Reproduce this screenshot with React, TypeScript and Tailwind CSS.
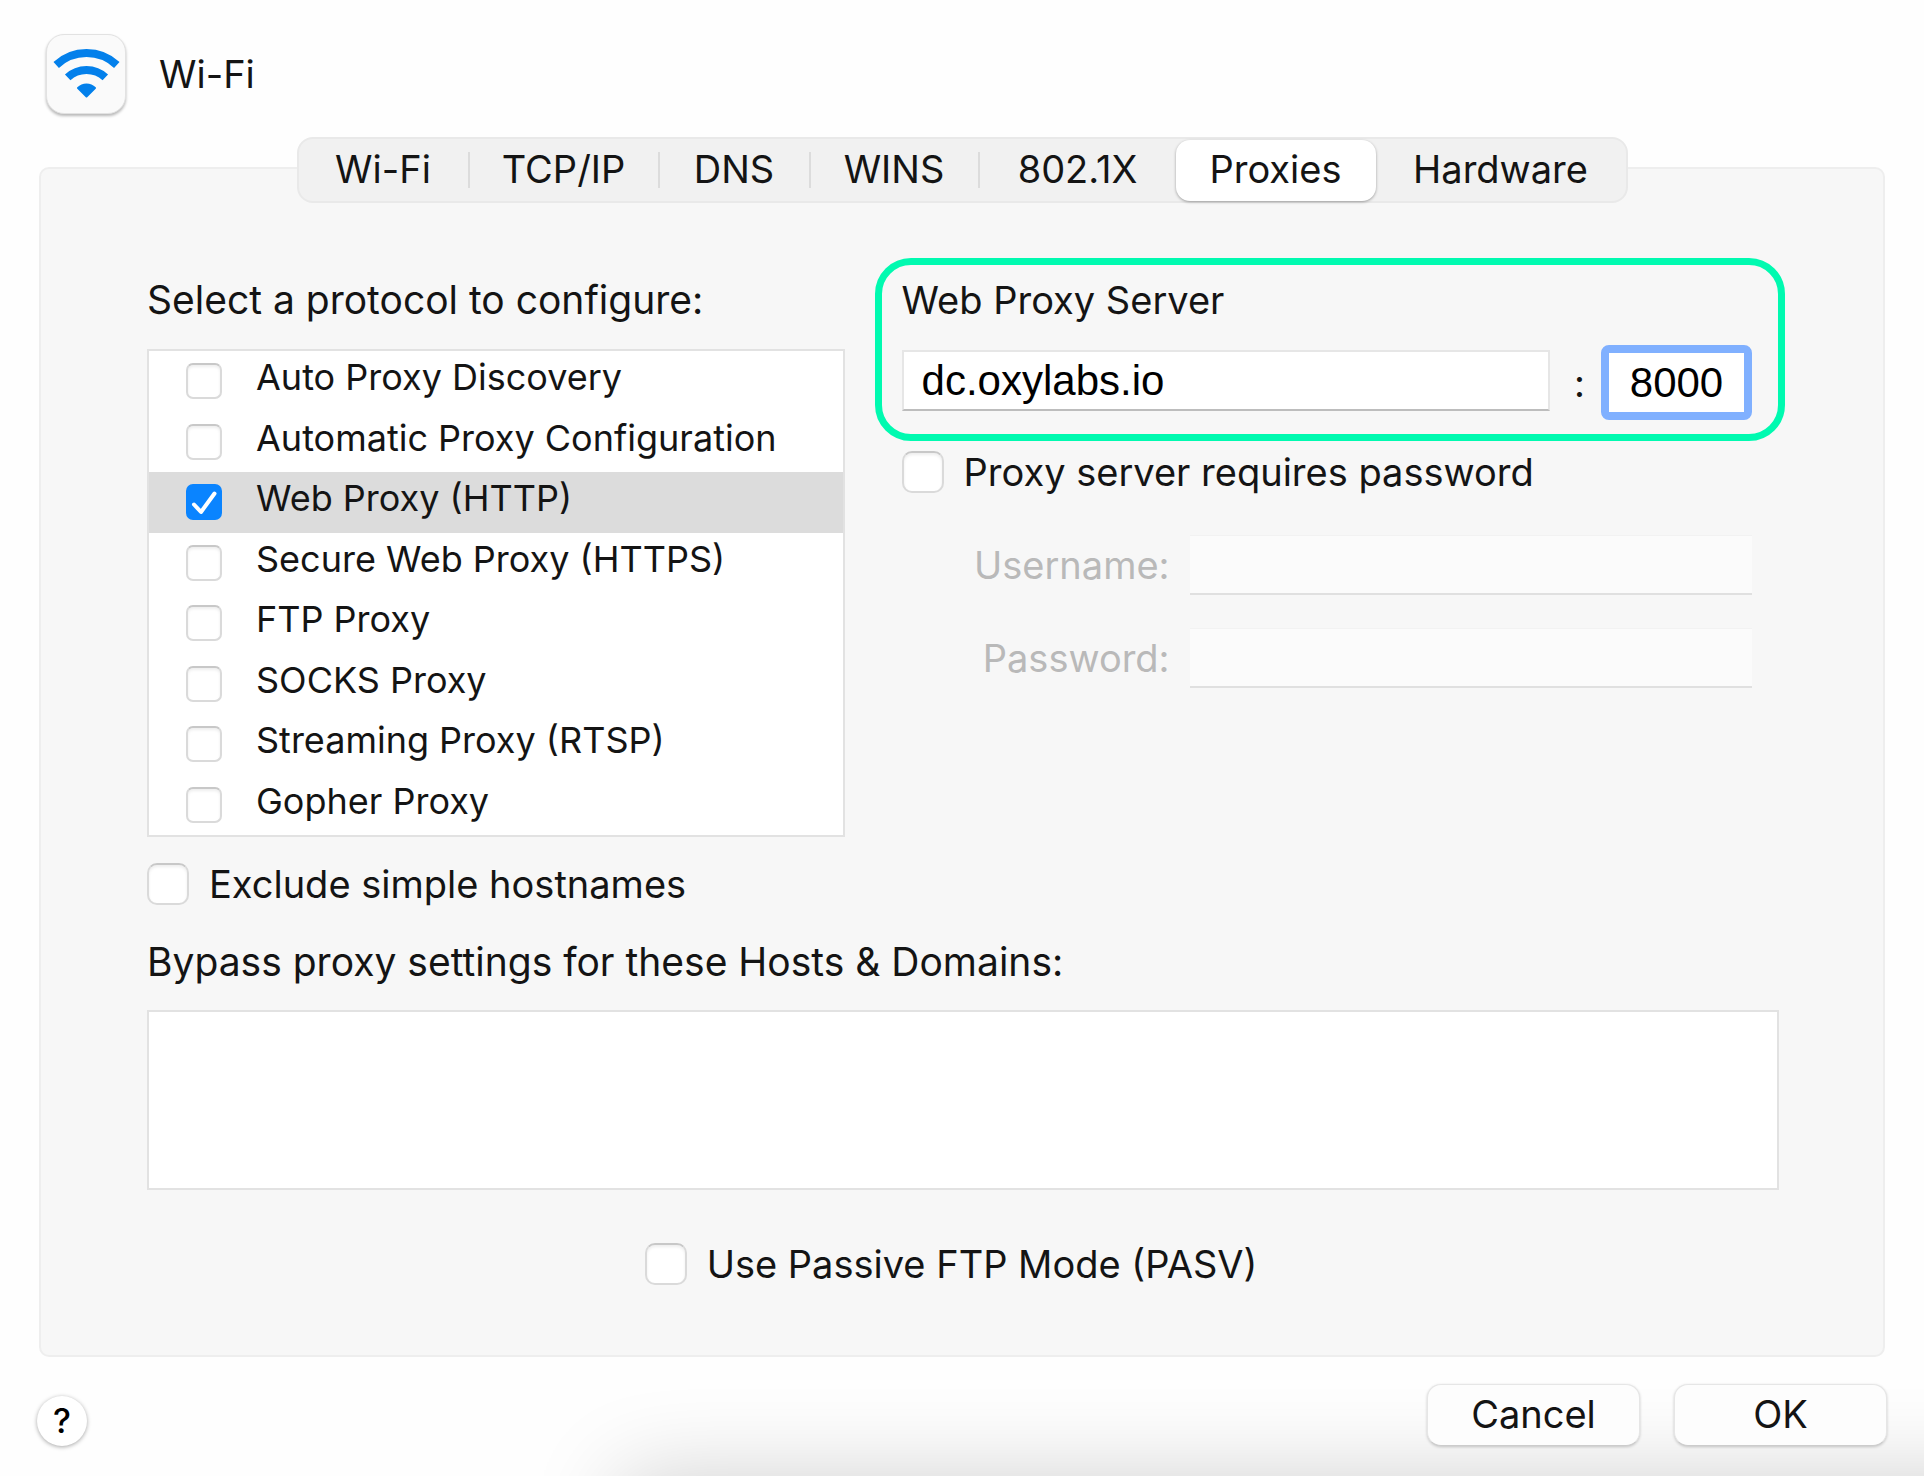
import { useState } from "react";
import clsx from "clsx";

const tabs = [
  { name: "Wi-Fi", width: "w-[171px]", divider: true },
  { name: "TCP/IP", width: "w-[190px]", divider: true },
  { name: "DNS", width: "w-[151px]", divider: true },
  { name: "WINS", width: "w-[169px]", divider: true },
  { name: "802.1X", width: "w-[196px]", divider: false },
  { name: "Proxies", width: "w-[200px]", divider: false },
  { name: "Hardware", width: "w-[250px]", divider: false },
];

const protocols = [
  "Auto Proxy Discovery",
  "Automatic Proxy Configuration",
  "Web Proxy (HTTP)",
  "Secure Web Proxy (HTTPS)",
  "FTP Proxy",
  "SOCKS Proxy",
  "Streaming Proxy (RTSP)",
  "Gopher Proxy",
];

interface CheckboxProps {
  id: string;
  small?: boolean;
  checked: boolean;
  onChange: (arg: boolean) => void;
}

const Checkbox = ({ id, small, checked, onChange }: CheckboxProps) => (
  <span className={clsx("relative shrink-0", small ? "size-9" : "size-[42px]")}>
    <input
      id={id}
      type="checkbox"
      checked={checked}
      onChange={(e) => onChange(e.target.checked)}
      className={clsx(
        "block size-full appearance-none border-2 border-[#dadada] border-t-[#c8c8c8] bg-white shadow-[inset_0_2px_3px_rgba(0,0,0,0.07)] checked:border-[#0a84ff] checked:bg-[#0a84ff] checked:shadow-none",
        small ? "rounded-[7px]" : "rounded-[10px]"
      )}
    />
    {checked && (
      <svg
        viewBox="0 0 36 36"
        className="pointer-events-none absolute inset-0 size-full"
        fill="none"
        stroke="white"
        strokeWidth="4"
        strokeLinecap="round"
        strokeLinejoin="round"
      >
        <path d="M8 20.5 L15 28 L28.5 9.5" />
      </svg>
    )}
  </span>
);

const WifiIcon = () => (
  <div className="size-20 rounded-[18px] border border-[#e2e2e2] bg-[#fafafa] shadow-[0_2px_3px_rgba(0,0,0,0.28)]">
    <svg viewBox="1 1 78 78" className="size-full" fill="none" stroke="#0380eb">
      <path d="M10.2 31 A44.5 44.5 0 0 1 70.8 31" strokeWidth="8" />
      <path d="M21.7 43.4 A27.5 27.5 0 0 1 59.3 43.4" strokeWidth="8" />
      <path
        d="M40.5 62.5 L32 54 A12 12 0 0 1 49 54 Z"
        fill="#0380eb"
        strokeWidth="2"
        strokeLinejoin="round"
      />
    </svg>
  </div>
);

const App = () => {
  const [activeTab, setActiveTab] = useState("Proxies");
  const [selected, setSelected] = useState("Web Proxy (HTTP)");
  const [enabled, setEnabled] = useState<string[]>(["Web Proxy (HTTP)"]);
  const [server, setServer] = useState("dc.oxylabs.io");
  const [port, setPort] = useState("8000");
  const [needsPassword, setNeedsPassword] = useState(false);
  const [excludeSimple, setExcludeSimple] = useState(false);
  const [passive, setPassive] = useState(false);

  const toggleProtocol = (name: string, on: boolean) => {
    setSelected(name);
    setEnabled(on ? [...enabled, name] : enabled.filter((p) => p !== name));
  };

  return (
    <div className="relative min-h-screen overflow-hidden bg-[#fefefe] px-[39px] pt-[34px] pb-6 font-['Inter',sans-serif] text-[38px] leading-[48px] text-[#141414]">
      {/* soft shadow rising from below the window */}
      <div className="absolute top-full left-[620px] -right-40 h-40 shadow-[0_0_90px_rgba(0,0,0,0.18)]" />

      <header className="flex items-center gap-[33px] pl-[7px]">
        <WifiIcon />
        <h1>Wi-Fi</h1>
      </header>

      <div className="relative z-10 mt-[23px] flex justify-center">
        <div
          role="tablist"
          className="flex h-[66px] items-center rounded-[16px] border-2 border-[#e9e9e9] bg-[#f1f1f1]"
        >
          {tabs.map((tab) => (
            <button
              key={tab.name}
              role="tab"
              aria-selected={activeTab === tab.name}
              onClick={() => setActiveTab(tab.name)}
              className={clsx(
                "flex items-center justify-center pb-[3px]",
                tab.width,
                activeTab === tab.name
                  ? "h-[61px] rounded-[14px] bg-white shadow-[0_1px_3px_rgba(0,0,0,0.35)]"
                  : "h-9",
                tab.divider && "border-r-2 border-[#dcdcdc]"
              )}
            >
              {tab.name}
            </button>
          ))}
        </div>
      </div>

      <main className="-mt-9 rounded-[10px] border-2 border-[#eeeeee] bg-[#f7f7f7] pt-[89px] pr-[98px] pb-[70px] pl-[106px]">
        <div className="grid grid-cols-[698fr_911fr] gap-x-[30px]">
          <section className="min-w-0 pt-[18px]">
            <h2 className="text-[39px]">Select a protocol to configure:</h2>
            <ul className="mt-[25px] flex h-[488px] flex-col border-2 border-[#e2e2e2] bg-white text-[36px]">
              {protocols.map((name, i) => (
                <li
                  key={name}
                  className={clsx(
                    "flex flex-1 items-center gap-[34px] pl-[37px]",
                    selected === name && "bg-[#dcdcdc]"
                  )}
                >
                  <Checkbox
                    id={`protocol-${i}`}
                    small
                    checked={enabled.includes(name)}
                    onChange={(on) => toggleProtocol(name, on)}
                  />
                  <label htmlFor={`protocol-${i}`} className="pb-2">
                    {name}
                  </label>
                </li>
              ))}
            </ul>
            <div className="mt-[26px] flex h-[42px] items-center gap-5">
              <Checkbox
                id="exclude"
                checked={excludeSimple}
                onChange={setExcludeSimple}
              />
              <label htmlFor="exclude">Exclude simple hostnames</label>
            </div>
          </section>

          <section className="min-w-0">
            <div className="rounded-[36px] border-[7px] border-[#00fab0] pt-[11px] pr-[26px] pb-[14px] pl-5">
              <label htmlFor="server">Web Proxy Server</label>
              <div className="mt-[21px] flex items-center">
                <input
                  id="server"
                  value={server}
                  onChange={(e) => setServer(e.target.value)}
                  className="mb-1 h-[61px] min-w-0 flex-1 border-2 border-[#e6e6e6] border-b-[#bdbdbd] bg-white px-[18px] font-['Liberation_Sans',sans-serif] text-[42px] text-black outline-none"
                />
                <span className="w-[51px] pl-2 text-center">:</span>
                <input
                  aria-label="Port"
                  value={port}
                  onChange={(e) => setPort(e.target.value)}
                  className="h-[75px] w-[151px] rounded-[8px] border-8 border-[#80b0ff] bg-white text-center font-['Liberation_Sans',sans-serif] text-[42px] text-black outline-none"
                />
              </div>
            </div>

            <div className="mt-[10px] flex h-[42px] items-center gap-5 pl-[27px]">
              <Checkbox
                id="needs-password"
                checked={needsPassword}
                onChange={setNeedsPassword}
              />
              <label htmlFor="needs-password">
                Proxy server requires password
              </label>
            </div>

            <div className="mt-[42px] flex flex-col gap-[33px] pr-[33px] pl-[27px] text-[#b9b9b9]">
              <div className="flex items-center gap-5">
                <label htmlFor="username" className="w-[268px] text-right">
                  Username:
                </label>
                <input
                  id="username"
                  disabled={!needsPassword}
                  className="h-[60px] min-w-0 flex-1 border-t border-b-2 border-t-[#f2f2f2] border-b-[#e0e0e0] bg-[#fbfbfb] px-4"
                />
              </div>
              <div className="flex items-center gap-5">
                <label htmlFor="password" className="w-[268px] text-right">
                  Password:
                </label>
                <input
                  id="password"
                  type="password"
                  disabled={!needsPassword}
                  className="h-[60px] min-w-0 flex-1 border-t border-b-2 border-t-[#f2f2f2] border-b-[#e0e0e0] bg-[#fbfbfb] px-4"
                />
              </div>
            </div>
          </section>
        </div>

        <section className="mt-[33px] pr-[6px]">
          <label htmlFor="bypass" className="block text-[39px]">
            Bypass proxy settings for these Hosts &amp; Domains:
          </label>
          <textarea
            id="bypass"
            className="mt-6 block h-[180px] w-full resize-none border-2 border-[#e2e2e2] bg-white px-4 py-2 outline-none"
          />
          <div className="mt-[53px] flex h-[42px] items-center justify-center gap-5 pr-6">
            <Checkbox id="passive" checked={passive} onChange={setPassive} />
            <label htmlFor="passive">Use Passive FTP Mode (PASV)</label>
          </div>
        </section>
      </main>

      <footer className="relative -mx-[2px] mt-[27px] flex items-end justify-between">
        <button
          aria-label="Help"
          className="size-[50px] rounded-full bg-white text-[34px] leading-[50px] font-medium text-black shadow-[0_1px_4px_rgba(0,0,0,0.35)]"
        >
          ?
        </button>
        <div className="flex gap-[34px]">
          <button className="h-[62px] w-[213px] rounded-[14px] border border-[#e6e6e6] border-b-[#cccccc] bg-[#fdfdfd] pb-[3px] shadow-[0_1px_3px_rgba(0,0,0,0.2)]">
            Cancel
          </button>
          <button className="h-[62px] w-[213px] rounded-[14px] border border-[#e6e6e6] border-b-[#cccccc] bg-[#fdfdfd] pb-[3px] shadow-[0_1px_3px_rgba(0,0,0,0.2)]">
            OK
          </button>
        </div>
      </footer>
    </div>
  );
};

export default App;
